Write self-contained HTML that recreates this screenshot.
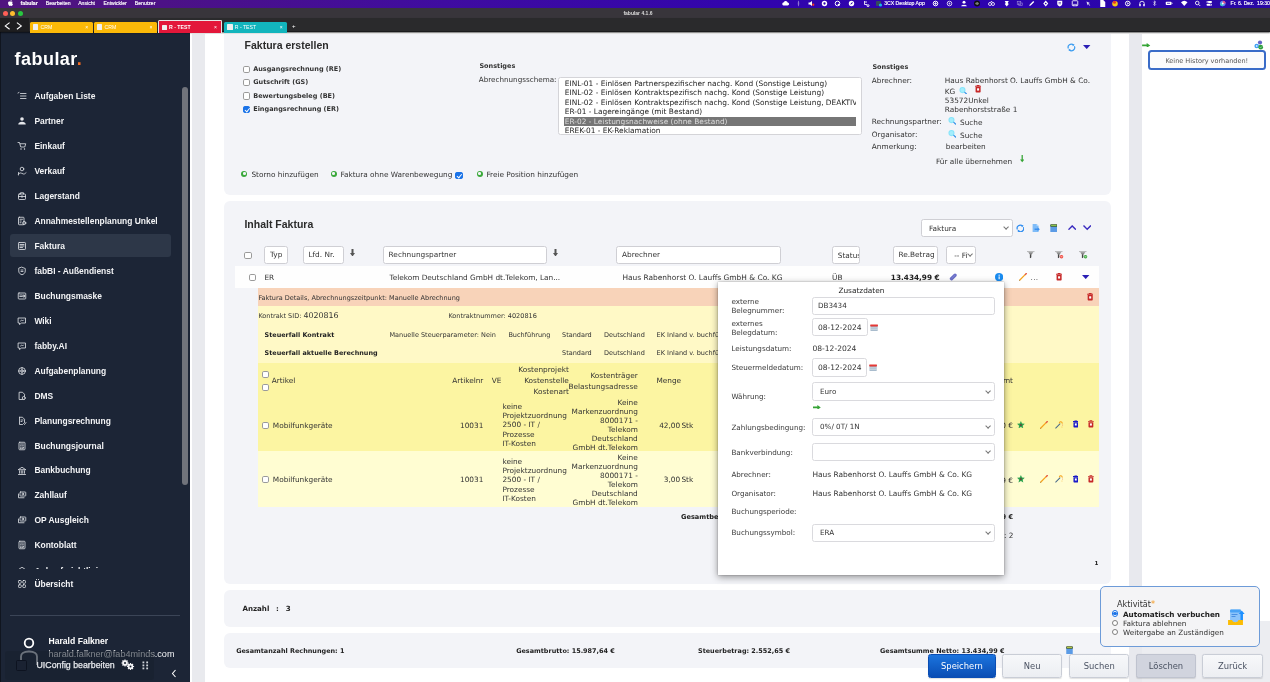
<!DOCTYPE html>
<html lang="de"><head><meta charset="utf-8"><title>fabular 4.1.6</title>
<style>
*{box-sizing:border-box;margin:0;padding:0}
html,body{width:1270px;height:682px;overflow:hidden;background:#fff}
body{will-change:transform;-webkit-font-smoothing:antialiased}
body{position:relative;font-family:"DejaVu Sans","Liberation Sans",sans-serif;font-size:7.35px;color:#333;line-height:10px}
.a{position:absolute}
.t{position:absolute;white-space:nowrap;line-height:10px}
.b{font-weight:bold;font-size:6.5px}
.s{font-size:6.53px}
.r{text-align:right}
.lib{font-family:"Liberation Sans",sans-serif}
/* chrome */
#menubar{left:0;top:0;width:1270px;height:8px;background:linear-gradient(90deg,#50147f 0%,#4c1286 13%,#3f0ca0 35%,#3104ad 60%,#2c03ae 80%,#2a08a6 100%)}
#titlebar{left:0;top:7.5px;width:1270px;height:11px;background:#38353b}
#tabbar{left:0;top:18px;width:1270px;height:13.6px;background:linear-gradient(90deg,#1e1e20 0,#1e1e20 29px,#2a2a2c 29px);border-bottom:1.2px solid #1b1b1d;box-shadow:0 .6px 1.2px rgba(0,0,0,.55)}
.mb{position:absolute;top:0;line-height:7px;font-family:"Liberation Sans",sans-serif;font-size:5.15px;color:#fff;white-space:nowrap;-webkit-text-stroke:.15px #fff}
.tab{position:absolute;top:22px;height:10.6px;border-radius:1.5px 1.5px 0 0;color:#fff;font-family:"Liberation Sans",sans-serif;font-size:5.2px;line-height:10px}
.tab i{position:absolute;left:3.1px;top:2.4px;width:5.4px;height:5.4px;background:#efefef;border-radius:.6px}
.tab span{position:absolute;left:10.5px;top:.4px}
.tab b{position:absolute;right:4.5px;top:.2px;font-weight:normal;font-size:5px}
/* sidebar */
#side{left:0;top:32.4px;width:190px;height:650px;background:#1c2536;border-left:1px solid #10151f}
.nav{position:absolute;left:33.4px;margin-top:.1px;white-space:nowrap;font-family:"Liberation Sans",sans-serif;font-weight:bold;font-size:8.45px;line-height:10px;color:#f3f4f6}
.ico{position:absolute;left:16px;width:10px;height:10px;margin-top:-.5px}
.ico svg{display:block;width:10px;height:10px}

.panel{position:absolute;background:#f3f4f8;border-radius:6px}
.cb{position:absolute;width:7.2px;height:7.2px;border:.8px solid #9a9a9a;border-radius:1.8px;background:#fff}
.cb.on{background:#1a73e8;border-color:#1a73e8}
.cb.on:after{content:"";position:absolute;left:1.9px;top:.2px;width:1.8px;height:3.6px;border:solid #fff;border-width:0 1px 1px 0;transform:rotate(40deg)}
.inp{position:absolute;background:#fff;border:.8px solid #cfcfd4;border-radius:2.5px}
.sel:after{content:"";position:absolute;right:3.6px;top:50%;margin-top:-2.6px;width:3.2px;height:3.2px;border:solid #777;border-width:0 .65px .65px 0;transform:rotate(45deg)}
.gp{position:absolute;width:6px;height:6px;border-radius:50%;background:#3aa93a}
.gp:after{content:"";position:absolute;left:1.7px;top:1.7px;width:2.6px;height:2.6px;border-radius:50%;background:#f3f4f8}

.kl{font-size:7.35px;line-height:9.05px}

.lb{position:absolute;left:731.4px;white-space:nowrap;font-size:7.2px;line-height:8.4px;color:#3a3a3a}
.pop{position:absolute;left:717.6px;top:282px;width:286.6px;height:293.4px;background:#fff;box-shadow:0 2px 7px rgba(0,0,0,.42),0 0 1.5px rgba(0,0,0,.3)}

.btn{position:absolute;top:654px;height:23.6px;width:60.4px;border-radius:2.5px;border:.8px solid #c9cdd6;background:linear-gradient(#f7f8fa,#eceef2);color:#4a5262;font-size:8.4px;line-height:23.6px;text-align:center;box-shadow:0 .5px 1px rgba(0,0,0,.12)}
.rd{position:absolute;left:1111.6px;width:6.8px;height:6.8px;margin-top:-.4px;border-radius:50%;border:.8px solid #808080;background:#fff}
</style></head><body>
<!-- backgrounds -->
<div class="a" style="left:191.8px;top:34px;width:13.7px;height:650px;background:#e9eaee"></div>
<div class="a" style="left:1129px;top:34px;width:13px;height:650px;background:#e8e9ee"></div>
<div class="a" style="left:1142px;top:621px;width:128px;height:61px;background:#ecedf1"></div>
<!-- CONTENT -->
<div class="panel" style="left:224px;top:34.2px;width:887px;height:160.6px;border-radius:0 0 6px 6px"></div>
<span class="t lib" style="left:244.6px;top:40px;font-weight:bold;font-size:10.5px;color:#2b2b2b">Faktura erstellen</span>
<i class="cb" style="left:243.3px;top:65.6px"></i><span class="t b" style="left:253.2px;top:64px">Ausgangsrechnung (RE)</span>
<i class="cb" style="left:243.3px;top:79px"></i><span class="t b" style="left:253.2px;top:77.4px">Gutschrift (GS)</span>
<i class="cb" style="left:243.3px;top:92.4px"></i><span class="t b" style="left:253.2px;top:90.8px">Bewertungsbeleg (BE)</span>
<i class="cb on" style="left:243.3px;top:105.8px"></i><span class="t b" style="left:253.2px;top:104.2px">Eingangsrechnung (ER)</span>
<i class="gp" style="left:241.4px;top:170.6px"></i><span class="t" style="left:251.4px;top:169.6px">Storno hinzufügen</span>
<i class="gp" style="left:330.6px;top:170.6px"></i><span class="t" style="left:340.4px;top:169.6px">Faktura ohne Warenbewegung</span>
<i class="cb on" style="left:455px;top:171.6px;width:7.6px;height:7.6px"></i>
<i class="gp" style="left:476.6px;top:170.6px"></i><span class="t" style="left:486.4px;top:169.6px">Freie Position hinzufügen</span>
<span class="t b" style="left:479.4px;top:61.4px">Sonstiges</span>
<span class="t" style="left:478.8px;top:75.2px;font-size:7.2px">Abrechnungsschema:</span>
<div class="inp" style="left:557.6px;top:77px;width:304px;height:57.8px;overflow:hidden;border-color:#d4d4d8">
<div class="a" style="left:5.6px;top:38.6px;width:292.2px;height:9px;background:#767676"></div>
<span class="t" style="left:6.2px;top:.8px;font-size:7.42px;line-height:9.46px;color:#222;white-space:pre">EINL-01 - Einlösen Partnerspezifischer nachg. Kond (Sonstige Leistung)
EINL-02 - Einlösen Kontraktspezifisch nachg. Kond (Sonstige Leistung)
EINL-02 - Einlösen Kontraktspezifisch nachg. Kond (Sonstige Leistung, DEAKTIV
ER-01 - Lagereingänge (mit Bestand)
<span style="color:#dcdcdc">ER-02 - Leistungsnachweise (ohne Bestand)</span>
EREK-01 - EK-Reklamation</span>
<div class="a" style="left:297.4px;top:0;width:6px;height:57px;background:#fff"></div>
</div>
<span class="t b" style="left:872.4px;top:62.4px">Sonstiges</span>
<span class="t" style="left:871.8px;top:75.6px">Abrechner:</span>
<span class="t" style="left:944.8px;top:75.6px">Haus Rabenhorst O. Lauffs GmbH &amp; Co.</span>
<span class="t" style="left:944.8px;top:86.5px">KG</span>
<span class="t" style="left:944.8px;top:96px">53572Unkel</span>
<span class="t" style="left:944.8px;top:104.7px">Rabenhorststraße 1</span>
<span class="t" style="left:871.8px;top:116.8px">Rechnungspartner:</span><span class="t" style="left:960px;top:118px">Suche</span>
<span class="t" style="left:871.8px;top:129.6px">Organisator:</span><span class="t" style="left:960px;top:130.6px">Suche</span>
<span class="t" style="left:871.8px;top:142.2px">Anmerkung:</span><span class="t" style="left:945.8px;top:142.1px">bearbeiten</span>
<span class="t" style="left:936px;top:156.5px">Für alle übernehmen</span>
<!-- P2 -->
<div class="panel" style="left:224px;top:201.4px;width:887px;height:382.6px"></div>
<span class="t lib" style="left:244.4px;top:219.4px;font-weight:bold;font-size:10.5px;color:#2b2b2b">Inhalt Faktura</span>
<i class="cb" style="left:244.4px;top:251.6px"></i>
<div class="inp" style="left:264.4px;top:245.8px;width:23.4px;height:17.8px"></div><span class="t" style="left:270.0px;top:250.2px">Typ</span>
<div class="inp" style="left:303px;top:245.8px;width:40.8px;height:17.8px"></div><span class="t" style="left:308.4px;top:250.2px">Lfd. Nr.</span>
<div class="inp" style="left:383px;top:245.8px;width:163.8px;height:17.8px"></div><span class="t" style="left:388.6px;top:250.2px">Rechnungspartner</span>
<div class="inp" style="left:616px;top:245.8px;width:165.2px;height:17.8px"></div><span class="t" style="left:622.0px;top:250.2px">Abrechner</span>
<div class="inp" style="left:832.2px;top:245.8px;width:27.8px;height:17.8px;overflow:hidden"><span class="t" style="left:4.6px;top:3.8px">Status</span></div>
<div class="inp" style="left:893.2px;top:245.8px;width:44.8px;height:17.8px"></div><span class="t" style="left:898.4px;top:250.2px">Re.Betrag</span>
<div class="inp sel" style="left:946px;top:245.8px;width:30.4px;height:17.8px;overflow:hidden"><span class="t" style="left:7.2px;top:3.8px;width:13.4px;overflow:hidden">-- Filter</span></div>
<div class="inp sel" style="left:921.4px;top:218.8px;width:91.4px;height:17.8px"></div><span class="t" style="left:929.0px;top:224.0px">Faktura</span>
<!-- white row -->
<div class="a" style="left:235.4px;top:266.4px;width:864px;height:21.6px;background:#fefefe"></div>
<i class="cb" style="left:248.6px;top:274px"></i>
<span class="t" style="left:264.4px;top:273.4px">ER</span>
<span class="t" style="left:389.4px;top:273.4px">Telekom Deutschland GmbH dt.Telekom, Lan...</span>
<span class="t" style="left:622.4px;top:273.4px;font-size:7.44px">Haus Rabenhorst O. Lauffs GmbH &amp; Co. KG</span>
<span class="t" style="left:832.0px;top:273.4px">ÜB</span>
<span class="t b" style="left:890.8px;top:273.4px;font-size:7.34px;color:#222">13.434,99 €</span>
<span class="t" style="left:1030.6px;top:273.4px;color:#666;letter-spacing:.3px">...</span>
<!-- salmon -->
<div class="a" style="left:257.8px;top:288px;width:841.4px;height:17.8px;background:#f8d3b9"></div>
<span class="t s" style="left:258.4px;top:293.4px">Faktura Details, Abrechnungszeitpunkt: Manuelle Abrechnung</span>
<!-- yellow -->
<div class="a" style="left:257.8px;top:305.8px;width:841.4px;height:57.6px;background:#fff9c6"></div>
<div class="a" style="left:257.8px;top:363.4px;width:841.4px;height:87.8px;background:#fcf5a2"></div>
<div class="a" style="left:257.8px;top:451.2px;width:841.4px;height:55.8px;background:#fffdd2"></div>
<span class="t s" style="left:258.4px;top:311.3px">Kontrakt SID: <span style="font-size:7.9px">4020816</span></span>
<span class="t s" style="left:448.4px;top:311.3px">Kontraktnummer: 4020816</span>
<span class="t b" style="left:264.6px;top:330.4px;font-size:6.43px;color:#222">Steuerfall Kontrakt</span>
<span class="t s" style="left:389.4px;top:330.4px">Manuelle Steuerparameter: Nein</span>
<span class="t s" style="left:508.4px;top:330.4px">Buchführung</span>
<span class="t s" style="left:562.0px;top:330.4px">Standard</span>
<span class="t s" style="left:604.0px;top:330.4px">Deutschland</span>
<span class="t s" style="left:656.6px;top:330.4px">EK Inland v. buchführungspfl.</span>
<span class="t b" style="left:264.6px;top:347.9px;font-size:6.43px;color:#222">Steuerfall aktuelle Berechnung</span>
<span class="t s" style="left:562.0px;top:347.9px">Standard</span>
<span class="t s" style="left:604.0px;top:347.9px">Deutschland</span>
<span class="t s" style="left:656.6px;top:347.9px">EK Inland v. buchführungspfl.</span>
<!-- item header -->
<i class="cb" style="left:262px;top:370.6px"></i><i class="cb" style="left:262px;top:383.6px"></i>
<span class="t" style="left:271.8px;top:375.8px">Artikel</span>
<span class="t r" style="left:440.0px;width:43.4px;top:375.8px">Artikelnr</span>
<span class="t" style="left:491.8px;top:375.8px">VE</span>
<span class="t r" style="left:500.0px;width:68.8px;top:365.4px;line-height:10.85px;white-space:pre">Kostenprojekt
Kostenstelle
Kostenart</span>
<span class="t r" style="left:560.0px;width:77.8px;top:370.0px;line-height:11px;white-space:pre">Kostenträger
Belastungsadresse</span>
<span class="t" style="left:656.4px;top:375.8px">Menge</span>
<span class="t r" style="left:940.0px;width:73px;top:375.8px">Betrag gesamt</span>
<i class="cb" style="left:262px;top:421.5px"></i><span class="t" style="left:272.8px;top:420.6px">Mobilfunkgeräte</span>
<span class="t r" style="left:440px;width:43.4px;top:420.6px">10031</span>
<span class="t kl" style="left:502.4px;top:402.4px;white-space:pre">keine
Projektzuordnung
2500 - IT /
Prozesse
IT-Kosten</span>
<span class="t kl r" style="left:560px;width:77.8px;top:397.6px;white-space:pre">Keine
Markenzuordnung
8000171 -
Telekom
Deutschland
GmbH dt.Telekom</span>
<span class="t r" style="left:640px;width:40.2px;top:420.6px">42,00</span><span class="t" style="left:681.4px;top:420.6px">Stk</span>
<i class="cb" style="left:262px;top:475.9px"></i><span class="t" style="left:272.8px;top:475.4px">Mobilfunkgeräte</span>
<span class="t r" style="left:440px;width:43.4px;top:475.4px">10031</span>
<span class="t kl" style="left:502.4px;top:457.4px;white-space:pre">keine
Projektzuordnung
2500 - IT /
Prozesse
IT-Kosten</span>
<span class="t kl r" style="left:560px;width:77.8px;top:452.8px;white-space:pre">Keine
Markenzuordnung
8000171 -
Telekom
Deutschland
GmbH dt.Telekom</span>
<span class="t r" style="left:640px;width:40.2px;top:475.4px">3,00</span><span class="t" style="left:681.4px;top:475.4px">Stk</span>
<span class="t r" style="left:950px;width:63px;top:420.8px">13.125,00 €</span><span class="t r" style="left:950px;width:63px;top:475.6px">309,99 €</span>
<span class="t b" style="left:681.0px;top:511.8px;font-size:6.6px;color:#222">Gesamtbetrag:</span>
<span class="t b" style="left:960.0px;top:512.0px;font-size:6.6px;color:#222;width:53px;text-align:right">13.434,99 €</span>
<span class="t" style="left:990px;top:530.6px;width:23.4px;text-align:right">: 2</span>
<span class="t b" style="left:1094.4px;top:558.4px;font-size:5.6px;color:#222">1</span>
<!-- P3 -->
<div class="panel" style="left:224px;top:589.8px;width:887px;height:37px"></div>
<span class="t b" style="left:242.4px;top:603.6px;font-size:7.1px;word-spacing:.9px;color:#222;white-space:pre">Anzahl  :  3</span>
<div class="panel" style="left:224px;top:633px;width:887px;height:35.4px"></div>
<span class="t b" style="left:236.2px;top:645.6px;font-size:6.46px;color:#222">Gesamtanzahl Rechnungen: 1</span>
<span class="t b" style="left:516.2px;top:645.6px;font-size:6.46px;color:#222">Gesamtbrutto: 15.987,64 €</span>
<span class="t b" style="left:698px;top:645.6px;font-size:6.46px;color:#222">Steuerbetrag: 2.552,65 €</span>
<span class="t b" style="left:880px;top:645.6px;font-size:6.46px;color:#222">Gesamtsumme Netto: 13.434,99 €</span>
<svg class="a" style="left:1015.6px;top:223.6px;width:8.8px;height:8.8px" viewBox="0 0 20 20"><path d="M3.200 12.500A7 7 0 0 1 14.500 4.600M16.800 7.500A7 7 0 0 1 5.500 15.400" fill="none" stroke="#2f8df0" stroke-width="2.800"/><path fill="#2f8df0" d="M12.500 1.500l5 2.500-4.200 3.200zM7.500 18.500l-5-2.500 4.200-3.200z"/></svg>
<svg class="a" style="left:1031.8px;top:224px;width:8.2px;height:8px" viewBox="0 0 16 16"><path d="M1 0h8l4 4v12H1z" fill="#7fbcf8"/><path d="M9 0l4 4H9z" fill="#b9dbfb"/><path d="M5 9h6V6.500l4.500 4-4.500 4V12H5z" fill="#3a8fee"/></svg>
<svg class="a" style="left:1049.5px;top:223.8px;width:7.6px;height:8.4px" viewBox="0 0 15 17"><rect x=".5" y="2" width="14" height="15" rx="1" fill="#5b9be6"/><rect x=".5" y=".5" width="14" height="5" rx="1" fill="#3c5a2a"/><rect x="2" y="1.800" width="11" height="2.400" fill="#8bc34a"/></svg>
<svg class="a" style="left:1067.6px;top:225.2px;width:8.4px;height:5.2px" viewBox="0 0 17 10"><path d="M1 9.200L8.500 1.600 16 9.200" fill="none" stroke="#3a2bc0" stroke-width="2.800"/></svg>
<svg class="a" style="left:1082.8px;top:225.4px;width:8.4px;height:5.2px" viewBox="0 0 17 10"><path d="M1 .8L8.500 8.400 16 .8" fill="none" stroke="#3a2bc0" stroke-width="2.800"/></svg>
<svg class="a" style="left:1027.4px;top:250.6px;width:9px;height:8.6px" viewBox="0 0 18 17"><path d="M0 1h15" stroke="#a8a8a8" stroke-width="1.600"/><path d="M2.500 2.500h10L9 7.500V13H6V7.500z" fill="#8a8a8a"/><path d="M6.800 7v7" stroke="#333" stroke-width="1.800"/></svg>
<svg class="a" style="left:1055px;top:250.6px;width:9px;height:8.6px" viewBox="0 0 18 17"><path d="M0 1h15" stroke="#a8a8a8" stroke-width="1.600"/><path d="M2.500 2.500h10L9 7.500V13H6V7.500z" fill="#8a8a8a"/><path d="M6.800 7v7" stroke="#333" stroke-width="1.800"/><circle cx="13" cy="11.500" r="3.600" fill="#f0443a"/><path d="M11 11.500h4" stroke="#fff" stroke-width="1.300"/></svg>
<svg class="a" style="left:1079.4px;top:250.6px;width:9px;height:8.6px" viewBox="0 0 18 17"><path d="M0 1h15" stroke="#a8a8a8" stroke-width="1.600"/><path d="M2.500 2.500h10L9 7.500V13H6V7.500z" fill="#8a8a8a"/><path d="M6.800 7v7" stroke="#333" stroke-width="1.800"/><circle cx="13" cy="11.500" r="3.600" fill="#3aa93a"/><path d="M11 11.500h4" stroke="#fff" stroke-width="1.300"/></svg>
<svg class="a" style="left:949.2px;top:272.8px;width:8.6px;height:8px" viewBox="0 0 17 16"><path d="M4.800 11.400L12 4.400" stroke="#6a6fc8" stroke-width="6.600" stroke-linecap="round"/><path d="M5.500 10.700L11.300 5" stroke="#8f94dc" stroke-width="1.200" stroke-linecap="round"/></svg>
<svg class="a" style="left:995px;top:272.8px;width:8.2px;height:8.2px" viewBox="0 0 16 16"><circle cx="8" cy="8" r="8" fill="#1a8cf0"/><rect x="7" y="6.600" width="2.200" height="5.600" fill="#fff"/><circle cx="8.100" cy="4.300" r="1.300" fill="#fff"/></svg>
<svg class="a" style="left:1018.8px;top:273.2px;width:8.2px;height:7.8px" viewBox="0 0 16 15"><path d="M1.200 14L13 2.200" stroke="#f5a21b" stroke-width="2.300" stroke-linecap="round"/><path d="M12.300 2.900L14.500 .9" stroke="#e2574c" stroke-width="2.300" stroke-linecap="round"/><path d="M.5 14.800l1.800-.6-1.200-1.200z" fill="#555"/></svg>
<svg class="a" style="left:1056px;top:273.2px;width:6.2px;height:7.6px" viewBox="0 0 12 15"><path fill="#c62828" d="M3.500 0h5l.7 1.300H12v2H0v-2h2.800zM1 4h10v9.500A1.500 1.500 0 0 1 9.500 15h-7A1.500 1.500 0 0 1 1 13.500z"/><rect x="4" y="6.500" width="4" height="4.500" fill="#fff"/></svg>
<svg class="a" style="left:1082.2px;top:275px;width:7.4px;height:4.2px" viewBox="0 0 15 8"><path d="M0 0h15L7.500 8z" fill="#2a1fb5"/></svg>
<svg class="a" style="left:1087px;top:293.2px;width:6.4px;height:7.6px" viewBox="0 0 12 15"><path fill="#c62828" d="M3.500 0h5l.7 1.300H12v2H0v-2h2.800zM1 4h10v9.500A1.500 1.500 0 0 1 9.500 15h-7A1.500 1.500 0 0 1 1 13.500z"/><rect x="4" y="6.500" width="4" height="4.500" fill="#fff"/></svg>
<svg class="a" style="left:1016.8px;top:421px;width:7.8px;height:7.4px" viewBox="0 0 20 19"><path fill="#2ea44f" d="M10 0l2.900 6.600 7.100.7-5.400 4.700 1.600 7-6.200-3.700L3.800 19l1.600-7L0 7.300l7.100-.7z"/><circle cx="10" cy="10.500" r="2.800" fill="#5a4a3a"/></svg>
<svg class="a" style="left:1039.8px;top:421px;width:8.2px;height:7.8px" viewBox="0 0 16 15"><path d="M1.200 14L13 2.200" stroke="#f5a21b" stroke-width="2.300" stroke-linecap="round"/><path d="M12.300 2.900L14.500 .9" stroke="#e2574c" stroke-width="2.300" stroke-linecap="round"/><path d="M.5 14.800l1.800-.6-1.200-1.200z" fill="#555"/></svg>
<svg class="a" style="left:1055px;top:421px;width:8.8px;height:7.6px" viewBox="0 0 17 15"><path d="M1.200 14L9.500 5.600" stroke="#4a6b8a" stroke-width="2" stroke-linecap="round"/><path d="M8.500 3.800c1-3 5-3 5.500 .4" fill="none" stroke="#f5a21b" stroke-width="2.200" stroke-linecap="round"/><circle cx="14.800" cy="8" r=".9" fill="#e2574c"/><circle cx="13.600" cy="11.800" r=".9" fill="#f5a21b"/></svg>
<svg class="a" style="left:1072.8px;top:420.4px;width:5.6px;height:7.8px" viewBox="0 0 12 15"><path fill="#1a1ac8" d="M3.500 0h5l.7 1.300H12v2H0v-2h2.800zM1 4h10v9.500A1.500 1.500 0 0 1 9.500 15h-7A1.500 1.500 0 0 1 1 13.500z"/><rect x="4" y="6.500" width="4" height="4.500" fill="#fff"/></svg>
<svg class="a" style="left:1088.4px;top:420.4px;width:5.8px;height:7.8px" viewBox="0 0 12 15"><path fill="#c62828" d="M3.500 0h5l.7 1.300H12v2H0v-2h2.800zM1 4h10v9.500A1.500 1.500 0 0 1 9.500 15h-7A1.500 1.500 0 0 1 1 13.500z"/><rect x="4" y="6.500" width="4" height="4.500" fill="#fff"/></svg>
<svg class="a" style="left:1016.8px;top:475.4px;width:7.8px;height:7.4px" viewBox="0 0 20 19"><path fill="#2ea44f" d="M10 0l2.900 6.600 7.100.7-5.400 4.700 1.600 7-6.200-3.700L3.800 19l1.600-7L0 7.300l7.100-.7z"/><circle cx="10" cy="10.500" r="2.800" fill="#5a4a3a"/></svg>
<svg class="a" style="left:1039.8px;top:475.4px;width:8.2px;height:7.8px" viewBox="0 0 16 15"><path d="M1.200 14L13 2.200" stroke="#f5a21b" stroke-width="2.300" stroke-linecap="round"/><path d="M12.300 2.900L14.500 .9" stroke="#e2574c" stroke-width="2.300" stroke-linecap="round"/><path d="M.5 14.800l1.800-.6-1.200-1.200z" fill="#555"/></svg>
<svg class="a" style="left:1055px;top:475.4px;width:8.8px;height:7.6px" viewBox="0 0 17 15"><path d="M1.200 14L9.500 5.600" stroke="#4a6b8a" stroke-width="2" stroke-linecap="round"/><path d="M8.500 3.800c1-3 5-3 5.500 .4" fill="none" stroke="#f5a21b" stroke-width="2.200" stroke-linecap="round"/><circle cx="14.800" cy="8" r=".9" fill="#e2574c"/><circle cx="13.600" cy="11.800" r=".9" fill="#f5a21b"/></svg>
<svg class="a" style="left:1072.8px;top:474.79999999999995px;width:5.6px;height:7.8px" viewBox="0 0 12 15"><path fill="#1a1ac8" d="M3.500 0h5l.7 1.300H12v2H0v-2h2.800zM1 4h10v9.500A1.500 1.500 0 0 1 9.500 15h-7A1.500 1.500 0 0 1 1 13.500z"/><rect x="4" y="6.500" width="4" height="4.500" fill="#fff"/></svg>
<svg class="a" style="left:1088.4px;top:474.79999999999995px;width:5.8px;height:7.8px" viewBox="0 0 12 15"><path fill="#c62828" d="M3.500 0h5l.7 1.300H12v2H0v-2h2.800zM1 4h10v9.500A1.500 1.500 0 0 1 9.500 15h-7A1.500 1.500 0 0 1 1 13.500z"/><rect x="4" y="6.500" width="4" height="4.500" fill="#fff"/></svg>
<svg class="a" style="left:1142.3px;top:42.6px;width:8.4px;height:4.8px" viewBox="0 0 17 10"><path d="M0 3h9.500V0L17 5l-7.500 5V7H0z" fill="#35a435"/></svg>
<svg class="a" style="left:1254.4px;top:40.4px;width:10px;height:10px" viewBox="0 0 20 20"><circle cx="12" cy="5" r="4.200" fill="#6464c8"/><circle cx="5.400" cy="12" r="4.600" fill="#3fa0f5"/><circle cx="5.400" cy="12" r="1.800" fill="#d6ebfd"/><circle cx="13.400" cy="14.400" r="4.700" fill="#2e9e3e"/><path d="M11.500 14.500l1.500 1.500 2.500-3" stroke="#bfe6c4" stroke-width="1.200" fill="none"/></svg>
<!-- POPUP -->
<div class="pop"></div>
<span class="t" style="left:838.4px;top:286.1px;color:#222">Zusatzdaten</span>
<span class="lb" style="top:298.4px;white-space:pre">externe
Belegnummer:</span>
<div class="inp" style="left:812.4px;top:296.5px;width:182.8px;height:18px;border-color:#dadade"></div><span class="t" style="left:818px;top:301.3px;font-size:7.2px">DB3434</span>
<span class="lb" style="top:320.2px;white-space:pre">externes
Belegdatum:</span>
<div class="inp" style="left:812.4px;top:318.2px;width:55.4px;height:18.3px;border-color:#dadade"></div><span class="t" style="left:818px;top:322.9px;font-size:7.5px">08-12-2024</span>
<span class="lb" style="top:345.0px">Leistungsdatum:</span><span class="t" style="left:812.4px;top:343.5px;font-size:7.58px">08-12-2024</span>
<span class="lb" style="top:364.4px">Steuermeldedatum:</span>
<div class="inp" style="left:812.4px;top:358.4px;width:54.4px;height:18.2px;border-color:#dadade"></div><span class="t" style="left:818px;top:362.9px;font-size:7.5px">08-12-2024</span>
<span class="lb" style="top:393.4px">Währung:</span>
<div class="inp sel" style="left:812.2px;top:382.4px;width:183px;height:18.4px;border-color:#dadade"></div><span class="t" style="left:820px;top:387.1px;font-size:7.2px">Euro</span>
<span class="lb" style="top:423.9px">Zahlungsbedingung:</span>
<div class="inp sel" style="left:812.2px;top:417.6px;width:183px;height:18.2px;border-color:#dadade"></div><span class="t" style="left:820px;top:422.3px;font-size:7.2px">0%/ 0T/ 1N</span>
<span class="lb" style="top:449.0px">Bankverbindung:</span>
<div class="inp sel" style="left:812.2px;top:442.8px;width:183px;height:18.2px;border-color:#dadade"></div>
<span class="lb" style="top:470.8px">Abrechner:</span><span class="t" style="left:812.4px;top:470.1px;font-size:7.43px">Haus Rabenhorst O. Lauffs GmbH &amp; Co. KG</span>
<span class="lb" style="top:489.7px">Organisator:</span><span class="t" style="left:812.4px;top:489px;font-size:7.43px">Haus Rabenhorst O. Lauffs GmbH &amp; Co. KG</span>
<span class="lb" style="top:508.0px">Buchungsperiode:</span>
<span class="lb" style="top:529.4px">Buchungssymbol:</span>
<div class="inp sel" style="left:812.2px;top:523.6px;width:183px;height:18.2px;border-color:#dadade"></div><span class="t" style="left:820px;top:528.1px;font-size:7.2px">ERA</span>
<svg class="a" style="left:869.8px;top:323.7px;width:8.2px;height:7.2px" viewBox="0 0 16 14"><rect x="1" y="2" width="14" height="12" rx="1" fill="#a9bccd"/><rect x=".5" y=".8" width="15" height="4" rx=".8" fill="#e53935"/><path d="M1.500 7.500h13M1.500 10.500h13" stroke="#e8eef4" stroke-width="1"/></svg>
<svg class="a" style="left:869px;top:364.3px;width:8.2px;height:7.2px" viewBox="0 0 16 14"><rect x="1" y="2" width="14" height="12" rx="1" fill="#a9bccd"/><rect x=".5" y=".8" width="15" height="4" rx=".8" fill="#e53935"/><path d="M1.500 7.500h13M1.500 10.500h13" stroke="#e8eef4" stroke-width="1"/></svg>
<svg class="a" style="left:813px;top:404.6px;width:7.8px;height:4.8px" viewBox="0 0 17 10"><path d="M0 3h9.500V0L17 5l-7.500 5V7H0z" fill="#35a435"/></svg>
<!-- /POPUP -->
<!-- BTN -->
<div class="btn" style="left:927.6px;width:68.6px;background:linear-gradient(#1b74de,#0a4db4);border-color:#0a4db4;color:#fff">Speichern</div>
<div class="btn" style="left:1002px">Neu</div>
<div class="btn" style="left:1069px">Suchen</div>
<div class="btn" style="left:1135.8px;background:#d1d4de;border-color:#bfc3cf">Löschen</div>
<div class="btn" style="left:1202.4px">Zurück</div>
<!-- ACT -->
<div class="a" style="left:1100.2px;top:586.2px;width:159.6px;height:60.8px;border:.9px solid #6d9bd8;border-radius:5px;background:#f4f4f6"></div>
<span class="t" style="left:1117.0px;top:599.4px;font-size:8.1px;color:#333">Aktivität<span style="color:#f59a23">*</span></span>
<i class="rd" style="top:610.8px;border-color:#1a73e8"></i><i class="a" style="left:1113.3px;top:612.1px;width:3.4px;height:3.4px;border-radius:50%;background:#1a73e8"></i>
<i class="rd" style="top:619.9px"></i>
<i class="rd" style="top:628.9px"></i>
<span class="t b" style="left:1123.0px;top:610.2px;font-size:7.25px;color:#222">Automatisch verbuchen</span>
<span class="t" style="left:1123.0px;top:619.2px;font-size:7.3px">Faktura ablehnen</span>
<span class="t" style="left:1123.0px;top:628.2px;font-size:7.28px">Weitergabe an Zuständigen</span>
<!-- RP -->
<div class="a" style="left:1148px;top:50.2px;width:118.4px;height:19.4px;border:2.1px solid #3a6cc8;border-radius:3.5px;background:#fbfbfc"></div>
<span class="t" style="left:1165.4px;top:55.8px;font-size:6.53px;color:#555">Keine History vorhanden!</span>
<!-- ICONS -->
<svg class="a" style="left:1067.2px;top:43.2px;width:8.8px;height:8.8px" viewBox="0 0 20 20"><path d="M3.200 12.500A7 7 0 0 1 14.500 4.600M16.800 7.500A7 7 0 0 1 5.500 15.400" fill="none" stroke="#3b9cf0" stroke-width="2.800"/><path fill="#3b9cf0" d="M12.500 1.500l5 2.500-4.200 3.200zM7.500 18.500l-5-2.500 4.200-3.200z"/></svg>
<svg class="a" style="left:1083.4px;top:45.2px;width:7.4px;height:4.2px" viewBox="0 0 15 8"><path d="M0 0h15L7.500 8z" fill="#2a1fb5"/></svg>
<svg class="a" style="left:958.8px;top:86.6px;width:8.6px;height:7.8px" viewBox="0 0 17 16"><circle cx="6.800" cy="6.400" r="6.200" fill="#86e4fa"/><circle cx="6.800" cy="6.400" r="4.200" fill="#a5edfc"/><path d="M11.600 11l3.600 3.400" stroke="#2f8fe8" stroke-width="2.400" stroke-linecap="round"/></svg>
<svg class="a" style="left:975.2px;top:85.4px;width:6.2px;height:7.6px" viewBox="0 0 12 15"><path fill="#c62828" d="M3.500 0h5l.7 1.300H12v2H0v-2h2.800zM1 4h10v9.500A1.500 1.500 0 0 1 9.500 15h-7A1.500 1.500 0 0 1 1 13.500z"/><rect x="4" y="6.500" width="4" height="4.500" fill="#fff"/></svg>
<svg class="a" style="left:947.8px;top:117.2px;width:8.6px;height:7.8px" viewBox="0 0 17 16"><circle cx="6.800" cy="6.400" r="6.200" fill="#86e4fa"/><circle cx="6.800" cy="6.400" r="4.200" fill="#a5edfc"/><path d="M11.600 11l3.600 3.400" stroke="#2f8fe8" stroke-width="2.400" stroke-linecap="round"/></svg>
<svg class="a" style="left:947.8px;top:130.1px;width:8.6px;height:7.8px" viewBox="0 0 17 16"><circle cx="6.800" cy="6.400" r="6.200" fill="#86e4fa"/><circle cx="6.800" cy="6.400" r="4.200" fill="#a5edfc"/><path d="M11.600 11l3.600 3.400" stroke="#2f8fe8" stroke-width="2.400" stroke-linecap="round"/></svg>
<svg class="a" style="left:1020px;top:155.2px;width:4.4px;height:7.4px" viewBox="0 0 9 15"><path d="M3.200 0h2.600v9H9l-4.500 6L0 9h3.200z" fill="#35a435"/></svg>
<svg class="a" style="left:350.4px;top:248.8px;width:5px;height:7.6px" viewBox="0 0 10 15"><path d="M3 0h4v8h3l-5 7-5-7h3z" fill="#555"/></svg>
<svg class="a" style="left:553px;top:248.8px;width:5px;height:7.6px" viewBox="0 0 10 15"><path d="M3 0h4v8h3l-5 7-5-7h3z" fill="#555"/></svg>
<svg class="a" style="left:1228.4px;top:608.6px;width:17px;height:16.4px" viewBox="0 0 34 33"><rect x="4" y="1" width="22" height="26" rx="2" fill="#8cc4fa"/><rect x="4" y="1" width="22" height="6" rx="2" fill="#4aa3f5"/><path d="M7 11h12M7 15h8" stroke="#4a90e2" stroke-width="2.200"/><path d="M25 24V10h-3.500L27.500 3l6 7H30v14z" fill="#1e90ff"/><path d="M0 22h8c1 3 3 4.500 6.500 4.500S20 25 21 22h9v9.500a1.500 1.500 0 0 1-1.500 1.500h-27A1.500 1.500 0 0 1 0 31.500z" fill="#fbbc05"/></svg>
<svg class="a" style="left:1065.8px;top:646px;width:7px;height:8px" viewBox="0 0 14 16"><rect x=".5" y="2" width="13" height="14" rx="1" fill="#5b9be6"/><rect x=".5" y=".5" width="13" height="5" rx="1" fill="#4a5a2a"/><rect x="2" y="1.800" width="10" height="2.400" fill="#b5c94a"/></svg>
<!-- ICONS3 -->



<!-- SIDEBAR -->
<div id="side" class="a">
<span class="a lib" style="left:13.6px;top:14.4px;font-weight:bold;font-size:18px;line-height:24px;color:#fff;letter-spacing:.45px;white-space:nowrap">fabular<span style="color:#f26b21">.</span></span>
<div class="a" style="left:9px;top:202px;width:161px;height:22.6px;border-radius:3px;background:#2d3748"></div>
<div class="a" style="left:0;top:0;width:189px;height:536.8px;overflow:hidden">
<span class="ico" style="top:59.6px"><svg viewBox="0 0 20 20"><path fill="none" stroke="#e5e7eb" stroke-width="1.6" stroke-linecap="round" stroke-linejoin="round" d="M7 5h11M7 10h11M7 15h11M2 4l2-1"/></svg></span><span class="nav" style="top:58.9px">Aufgaben Liste</span>
<span class="ico" style="top:84.5px"><svg viewBox="0 0 20 20"><circle cx="10" cy="6" r="3.6" fill="#e5e7eb"/><path fill="#e5e7eb" d="M2.500 17c0-4 3.500-5.500 7.500-5.500s7.500 1.500 7.500 5.500z"/></svg></span><span class="nav" style="top:83.8px">Partner</span>
<span class="ico" style="top:109.5px"><svg viewBox="0 0 20 20"><path fill="none" stroke="#e5e7eb" stroke-width="1.6" stroke-linecap="round" stroke-linejoin="round" d="M2 3h3l2.500 9h8l2-6.500H6.500"/><circle cx="8" cy="16" r="1.400" fill="#e5e7eb"/><circle cx="15" cy="16" r="1.400" fill="#e5e7eb"/></svg></span><span class="nav" style="top:108.8px">Einkauf</span>
<span class="ico" style="top:134.4px"><svg viewBox="0 0 20 20"><circle cx="10" cy="6" r="3.600" fill="none" stroke="#e5e7eb" stroke-width="1.6" stroke-linecap="round" stroke-linejoin="round"/><path fill="none" stroke="#e5e7eb" stroke-width="1.6" stroke-linecap="round" stroke-linejoin="round" d="M3 16c2-2.500 4-2.500 6-1.500l4 1.500c2 .5 3-1 5-2.500M3 13v5"/></svg></span><span class="nav" style="top:133.7px">Verkauf</span>
<span class="ico" style="top:159.4px"><svg viewBox="0 0 20 20"><rect x="3" y="6" width="14" height="11" rx="1.500" fill="none" stroke="#e5e7eb" stroke-width="1.6" stroke-linecap="round" stroke-linejoin="round"/><path fill="none" stroke="#e5e7eb" stroke-width="1.6" stroke-linecap="round" stroke-linejoin="round" d="M7 6V3.500h6V6M3 11h14M10 9v4"/></svg></span><span class="nav" style="top:158.7px">Lagerstand</span>
<span class="ico" style="top:184.3px"><svg viewBox="0 0 20 20"><rect x="3" y="2.500" width="11" height="15" rx="1.500" fill="none" stroke="#e5e7eb" stroke-width="1.6" stroke-linecap="round" stroke-linejoin="round"/><path fill="none" stroke="#e5e7eb" stroke-width="1.6" stroke-linecap="round" stroke-linejoin="round" d="M6 6.500h5M6 10h2.500M6 13.500h2"/><circle cx="14.500" cy="14" r="3.200" fill="none" stroke="#e5e7eb" stroke-width="1.6" stroke-linecap="round" stroke-linejoin="round"/></svg></span><span class="nav" style="top:183.6px">Annahmestellenplanung Unkel</span>
<span class="ico" style="top:209.2px"><svg viewBox="0 0 20 20"><rect x="3" y="3" width="14" height="14" rx="1.500" fill="none" stroke="#e5e7eb" stroke-width="1.6" stroke-linecap="round" stroke-linejoin="round"/><path fill="none" stroke="#e5e7eb" stroke-width="1.6" stroke-linecap="round" stroke-linejoin="round" d="M6 7h8M6 10h8M6 13h5"/></svg></span><span class="nav" style="top:208.5px">Faktura</span>
<span class="ico" style="top:234.2px"><svg viewBox="0 0 20 20"><path fill="none" stroke="#e5e7eb" stroke-width="1.6" stroke-linecap="round" stroke-linejoin="round" d="M10 2.500l6.500 2.500v5c0 4-3 6.500-6.500 7.500-3.500-1-6.500-3.500-6.500-7.500V5z"/><path fill="none" stroke="#e5e7eb" stroke-width="1.6" stroke-linecap="round" stroke-linejoin="round" d="M8 8h4M8 11h4"/></svg></span><span class="nav" style="top:233.5px">fabBI - Außendienst</span>
<span class="ico" style="top:259.1px"><svg viewBox="0 0 20 20"><rect x="2.500" y="4" width="15" height="12" rx="1.500" fill="none" stroke="#e5e7eb" stroke-width="1.6" stroke-linecap="round" stroke-linejoin="round"/><path fill="none" stroke="#e5e7eb" stroke-width="1.6" stroke-linecap="round" stroke-linejoin="round" d="M5.500 8h5M5.500 11h5M13 8h2v4h-2z"/></svg></span><span class="nav" style="top:258.4px">Buchungsmaske</span>
<span class="ico" style="top:284.1px"><svg viewBox="0 0 20 20"><path fill="none" stroke="#e5e7eb" stroke-width="1.6" stroke-linecap="round" stroke-linejoin="round" d="M3 4h14v10H9l-4 3v-3H3z"/><path fill="none" stroke="#e5e7eb" stroke-width="1.6" stroke-linecap="round" stroke-linejoin="round" d="M7 10l2-2 2 2 2-2"/></svg></span><span class="nav" style="top:283.4px">Wiki</span>
<span class="ico" style="top:309.0px"><svg viewBox="0 0 20 20"><path fill="none" stroke="#e5e7eb" stroke-width="1.6" stroke-linecap="round" stroke-linejoin="round" d="M3 4h14v10H9l-4 3v-3H3z"/><path fill="none" stroke="#e5e7eb" stroke-width="1.6" stroke-linecap="round" stroke-linejoin="round" d="M7 10l2-2 2 2 2-2"/></svg></span><span class="nav" style="top:308.3px">fabby.AI</span>
<span class="ico" style="top:333.9px"><svg viewBox="0 0 20 20"><circle cx="10" cy="10" r="6.800" fill="none" stroke="#e5e7eb" stroke-width="1.6" stroke-linecap="round" stroke-linejoin="round"/><circle cx="10" cy="10" r="2.300" fill="none" stroke="#e5e7eb" stroke-width="1.6" stroke-linecap="round" stroke-linejoin="round"/><path fill="none" stroke="#e5e7eb" stroke-width="1.6" stroke-linecap="round" stroke-linejoin="round" d="M10 3v4.500M10 12.500V17M3 10h4.500M12.500 10H17"/></svg></span><span class="nav" style="top:333.2px">Aufgabenplanung</span>
<span class="ico" style="top:358.9px"><svg viewBox="0 0 20 20"><path fill="none" stroke="#e5e7eb" stroke-width="1.6" stroke-linecap="round" stroke-linejoin="round" d="M5 2.500h6l4 4V17H5z"/><circle cx="13.500" cy="14" r="3" fill="#1c2536" fill="none" stroke="#e5e7eb" stroke-width="1.6" stroke-linecap="round" stroke-linejoin="round"/></svg></span><span class="nav" style="top:358.2px">DMS</span>
<span class="ico" style="top:383.8px"><svg viewBox="0 0 20 20"><path fill="none" stroke="#e5e7eb" stroke-width="1.6" stroke-linecap="round" stroke-linejoin="round" d="M5 2.500h6l4 4V13M5 2.500V17h6"/><path fill="none" stroke="#e5e7eb" stroke-width="1.6" stroke-linecap="round" stroke-linejoin="round" d="M8 8h4M8 11h2M13 15l2 2 3-4"/></svg></span><span class="nav" style="top:383.1px">Planungsrechnung</span>
<span class="ico" style="top:408.8px"><svg viewBox="0 0 20 20"><rect x="4" y="2.500" width="12" height="15" rx="1.500" fill="none" stroke="#e5e7eb" stroke-width="1.6" stroke-linecap="round" stroke-linejoin="round"/><path fill="none" stroke="#e5e7eb" stroke-width="1.6" stroke-linecap="round" stroke-linejoin="round" d="M7 6h6M7 9.500h1M10 9.500h1M13 9.500h0M7 12.500h1M10 12.500h1M13 12.500v2M7 15h1M10 15h1"/></svg></span><span class="nav" style="top:408.1px">Buchungsjournal</span>
<span class="ico" style="top:433.7px"><svg viewBox="0 0 20 20"><path fill="none" stroke="#e5e7eb" stroke-width="1.6" stroke-linecap="round" stroke-linejoin="round" d="M3 7l7-4.500L17 7zM5 9.500v5M8.500 9.500v5M11.500 9.500v5M15 9.500v5M3 17h14"/></svg></span><span class="nav" style="top:433.0px">Bankbuchung</span>
<span class="ico" style="top:458.6px"><svg viewBox="0 0 20 20"><rect x="6" y="4" width="11.500" height="8" rx="1.200" fill="none" stroke="#e5e7eb" stroke-width="1.6" stroke-linecap="round" stroke-linejoin="round"/><path fill="none" stroke="#e5e7eb" stroke-width="1.6" stroke-linecap="round" stroke-linejoin="round" d="M3 8v7.500h11"/><circle cx="11.700" cy="8" r="1.700" fill="none" stroke="#e5e7eb" stroke-width="1.6" stroke-linecap="round" stroke-linejoin="round"/></svg></span><span class="nav" style="top:457.9px">Zahllauf</span>
<span class="ico" style="top:483.6px"><svg viewBox="0 0 20 20"><rect x="6" y="4" width="11.500" height="8" rx="1.200" fill="none" stroke="#e5e7eb" stroke-width="1.6" stroke-linecap="round" stroke-linejoin="round"/><path fill="none" stroke="#e5e7eb" stroke-width="1.6" stroke-linecap="round" stroke-linejoin="round" d="M3 8v7.500h11"/><circle cx="11.700" cy="8" r="1.700" fill="none" stroke="#e5e7eb" stroke-width="1.6" stroke-linecap="round" stroke-linejoin="round"/></svg></span><span class="nav" style="top:482.9px">OP Ausgleich</span>
<span class="ico" style="top:508.5px"><svg viewBox="0 0 20 20"><rect x="4" y="2.500" width="12" height="15" rx="1.500" fill="none" stroke="#e5e7eb" stroke-width="1.6" stroke-linecap="round" stroke-linejoin="round"/><path fill="none" stroke="#e5e7eb" stroke-width="1.6" stroke-linecap="round" stroke-linejoin="round" d="M7 6h6M7 9.500h1M10 9.500h1M13 9.500h0M7 12.500h1M10 12.500h1M13 12.500v2M7 15h1M10 15h1"/></svg></span><span class="nav" style="top:507.8px">Kontoblatt</span>
<span class="ico" style="top:534.4px"><svg viewBox="0 0 20 20"><path fill="none" stroke="#e5e7eb" stroke-width="1.6" stroke-linecap="round" stroke-linejoin="round" d="M3 7l7-4.500L17 7zM5 9.500v5M8.500 9.500v5M11.500 9.500v5M15 9.500v5M3 17h14"/></svg></span><span class="nav" style="top:533.7px">Ankaufsrichtlinie</span>
</div>
<span class="ico" style="top:547.1px"><svg viewBox="0 0 20 20"><rect x="3" y="3" width="5.500" height="5.500" rx="1.500" fill="none" stroke="#e5e7eb" stroke-width="1.6" stroke-linecap="round" stroke-linejoin="round"/><rect x="11.500" y="3" width="5.500" height="5.500" rx="1.500" fill="none" stroke="#e5e7eb" stroke-width="1.6" stroke-linecap="round" stroke-linejoin="round"/><rect x="3" y="11.500" width="5.500" height="5.500" rx="1.500" fill="none" stroke="#e5e7eb" stroke-width="1.6" stroke-linecap="round" stroke-linejoin="round"/><rect x="11.500" y="11.500" width="5.500" height="5.500" rx="1.500" fill="none" stroke="#e5e7eb" stroke-width="1.6" stroke-linecap="round" stroke-linejoin="round"/></svg></span><span class="nav" style="top:546.4px">Übersicht</span>
<div class="a" style="left:181.1px;top:54.4px;width:6px;height:398px;border-radius:3px;background:#70737b"></div>
<div class="a" style="left:9px;top:582.6px;width:170px;height:.8px;background:#3b4557"></div>
<svg class="a" style="left:17px;top:603px;width:22px;height:30px" viewBox="0 0 22 30"><circle cx="11" cy="8" r="4.300" fill="none" stroke="#fff" stroke-width="1.800"/><path d="M3 30v-8.500c0-3 2.500-4.800 8-4.800s8 1.800 8 4.800V30" fill="none" stroke="#d1d5db" stroke-width="1.800"/></svg>
<span class="nav" style="left:47.5px;top:604px;font-size:8.6px;color:#fff">Harald Falkner</span>
<span class="nav" style="left:47.5px;top:616.6px;font-weight:normal;font-size:9.1px;color:#f3f4f6">harald.falkner@fab4minds.com</span>
<div class="a" style="left:4px;top:619px;width:149.4px;height:28.4px;border-radius:3px;background:rgba(24,32,46,.55)"></div>
<div class="a" style="left:15.4px;top:628px;width:10.6px;height:10.6px;border:1px solid #0d1320;border-radius:1.500px;background:#1a2232"></div>
<span class="nav" style="left:35.5px;top:628px;font-weight:normal;font-size:8.8px;color:#e5e7eb;-webkit-text-stroke:.25px #e5e7eb">UIConfig bearbeiten</span>
<svg class="a" style="left:120px;top:627px;width:14px;height:12px" viewBox="0 0 28 24"><g fill="#f3f4f6"><circle cx="8" cy="8" r="5.500"/><circle cx="19" cy="15" r="5.500"/></g><g fill="#18202e"><circle cx="8" cy="8" r="2.200"/><circle cx="19" cy="15" r="2.200"/></g><g stroke="#f3f4f6" stroke-width="2.400"><path d="M8 .8v14.400M.8 8h14.400M3 3l10 10M13 3L3 13M19 7.800v14.400M11.800 15h14.400M14 10l10 10M24 10L14 20"/></g><g fill="#18202e"><circle cx="8" cy="8" r="2"/><circle cx="19" cy="15" r="2"/></g></svg>
<svg class="a" style="left:140.500px;top:629px;width:7px;height:9px" viewBox="0 0 14 18"><g fill="#d1d5db"><rect x="1" y="1" width="3.600" height="3.600"/><rect x="8.500" y="1" width="3.600" height="3.600"/><rect x="1" y="7" width="3.600" height="3.600"/><rect x="8.500" y="7" width="3.600" height="3.600"/><rect x="1" y="13" width="3.600" height="3.600"/><rect x="8.500" y="13" width="3.600" height="3.600"/></g></svg>
<svg class="a" style="left:170px;top:636.500px;width:6px;height:9px" viewBox="0 0 12 18"><path d="M9 2L3 9l6 7" fill="none" stroke="#fff" stroke-width="2.200"/></svg>
</div>
<!-- CHROME -->
<div id="menubar" class="a">
<svg class="a" style="left:7.9px;top:-.2px;width:5px;height:5.9px" viewBox="0 0 20 24"><path fill="#fff" d="M14.5 0c.2 1.5-.4 2.9-1.300 4-.9 1.100-2.300 1.900-3.700 1.800-.2-1.400.5-2.900 1.300-3.800C11.700 .9 13.200 .1 14.500 0zM19.300 8.200c-1.600 1-2.600 2.500-2.600 4.400 0 2.200 1.300 3.900 3.300 4.700-.5 1.500-1.200 2.900-2.200 4.200-1 1.300-2 2.500-3.500 2.500s-2-.9-3.800-.9c-1.800 0-2.400.9-3.800.9-1.500 0-2.600-1.300-3.600-2.600C.9 18.300-.5 14 .2 10.600c.6-2.600 2.800-4.800 5.600-4.800 1.500 0 2.800 1 3.800 1 1 0 2.600-1.100 4.500-1.100 1.900 0 3.900.9 5.200 2.500z"/></svg>
<span class="mb" style="left:20.6px;font-weight:bold">fabular</span>
<span class="mb" style="left:45.8px">Bearbeiten</span>
<span class="mb" style="left:78.2px">Ansicht</span>
<span class="mb" style="left:103.4px">Entwickler</span>
<span class="mb" style="left:134.8px">Benutzer</span>
<svg class="a" style="left:781.1px;top:-.4px;width:8.5px;height:7px;opacity:1" viewBox="0 0 14 14"><path d="M3.500 11h8a3 3 0 0 0 .3-6 4 4 0 0 0-7.600-.5A3.300 3.300 0 0 0 3.500 11z" fill="#fff"/></svg>
<svg class="a" style="left:795.2px;top:-.4px;width:7px;height:7px;opacity:0.45" viewBox="0 0 14 14"><path d="M7 1c2 3 2 9 0 12c-2-3-2-9 0-12z" fill="#fff"/></svg>
<svg class="a" style="left:807.0px;top:-.4px;width:8px;height:7px;opacity:1" viewBox="0 0 14 14"><path d="M2 5h3l4-3v10l-4-3H2z" fill="#fff"/><circle cx="11.500" cy="9.500" r="2.300" fill="#f0342c"/></svg>
<svg class="a" style="left:820.7px;top:-.4px;width:7px;height:7px;opacity:1" viewBox="0 0 14 14"><circle cx="7" cy="7" r="5.400" fill="#fff"/><circle cx="7" cy="7" r="2.300" fill="#3104ad"/></svg>
<svg class="a" style="left:833.5px;top:-.4px;width:7px;height:7px;opacity:1" viewBox="0 0 14 14"><circle cx="7" cy="7" r="4.600" fill="none" stroke="#fff" stroke-width="2"/><circle cx="9.500" cy="9.500" r="2.200" fill="#fff"/></svg>
<svg class="a" style="left:847.8px;top:-.4px;width:7px;height:7px;opacity:1" viewBox="0 0 14 14"><circle cx="7" cy="7" r="5.400" fill="#fff"/><path d="M4.500 9.500l1.800-3.700 3.700-1.800-1.800 3.700z" fill="#3104ad"/></svg>
<svg class="a" style="left:862.7px;top:-.4px;width:7px;height:7px;opacity:1" viewBox="0 0 14 14"><path d="M3 2v7h5M6 2v4M10 9.500a2 2 0 1 0 .1 0" fill="none" stroke="#fff" stroke-width="1.700"/></svg>
<svg class="a" style="left:874.8px;top:-.4px;width:8px;height:7px;opacity:1" viewBox="0 0 14 14"><rect x="1" y="2" width="10" height="10" rx="1.500" fill="#34495e"/><circle cx="10" cy="10" r="3.200" fill="#19b5e8"/></svg>
<svg class="a" style="left:932.3px;top:-.4px;width:7px;height:7px;opacity:1" viewBox="0 0 14 14"><circle cx="7" cy="7" r="4.600" fill="none" stroke="#fff" stroke-width="2"/><path d="M4 7h6M7 4v6" stroke="#fff" stroke-width="1.400"/></svg>
<svg class="a" style="left:946.0px;top:-.4px;width:7px;height:7px;opacity:0.8" viewBox="0 0 14 14"><circle cx="7" cy="7" r="4.600" fill="none" stroke="#fff" stroke-width="2"/><circle cx="7" cy="7" r="1.800" fill="#fff"/></svg>
<svg class="a" style="left:959.5px;top:-.4px;width:8px;height:7px;opacity:1" viewBox="0 0 14 14"><circle cx="7" cy="4.500" r="3" fill="#fff"/><path d="M1.500 12.500c0-4 11-4 11 0z" fill="#fff"/><circle cx="7" cy="8.500" r="1.500" fill="#3104ad"/></svg>
<svg class="a" style="left:973.2px;top:-.4px;width:8px;height:7px;opacity:1" viewBox="0 0 14 14"><circle cx="7" cy="7" r="6" fill="#111"/><path d="M3.500 7h1M5.500 5v4M7.500 4v6M9.500 5.500v3" stroke="#fff" stroke-width="1"/></svg>
<svg class="a" style="left:986.5px;top:-.4px;width:9px;height:7px;opacity:1" viewBox="0 0 14 14"><circle cx="4" cy="8" r="3" fill="none" stroke="#fff" stroke-width="1.600"/><circle cx="10" cy="8" r="3" fill="none" stroke="#fff" stroke-width="1.600"/><path d="M4 5l2-2h2l2 2" fill="none" stroke="#fff" stroke-width="1.400"/></svg>
<svg class="a" style="left:1002.6px;top:-.4px;width:7.5px;height:7px;opacity:1" viewBox="0 0 14 14"><path d="M3 2h8l-2 4 2 2-4 5-4-5 2-2z" fill="#fff"/></svg>
<svg class="a" style="left:1016.0px;top:-.4px;width:7.5px;height:7px;opacity:0.5" viewBox="0 0 14 14"><rect x="2" y="3" width="7" height="6" fill="none" stroke="#fff" stroke-width="1.300"/><rect x="5" y="6" width="7" height="5" fill="none" stroke="#fff" stroke-width="1.300"/></svg>
<svg class="a" style="left:1027.8px;top:-.4px;width:7.5px;height:7px;opacity:1" viewBox="0 0 14 14"><path d="M2 12l1-3 7-7 2 2-7 7z" fill="#fff"/></svg>
<svg class="a" style="left:1041.5px;top:-.4px;width:7.5px;height:7px;opacity:1" viewBox="0 0 14 14"><path d="M7 1l5 6-5 6-5-6z" fill="#fff"/><circle cx="7" cy="7" r="1.700" fill="#3104ad"/></svg>
<svg class="a" style="left:1056.0px;top:-.4px;width:7.5px;height:7px;opacity:1" viewBox="0 0 14 14"><path d="M2 1.500h10v6c0 3-2.500 4.500-5 5.500-2.500-1-5-2.500-5-5.500z" fill="#fff"/><path d="M4.500 5h5M4.500 7.500h5" stroke="#3a0f9b" stroke-width="1.100"/></svg>
<svg class="a" style="left:1070.5px;top:-.4px;width:8px;height:7px;opacity:1" viewBox="0 0 14 14"><rect x="1.500" y="1.500" width="11" height="10" rx="1.500" fill="none" stroke="#fff" stroke-width="1.700"/><path d="M4 11.500V8.500h2l1 1.500 1-1.500h2v3" fill="none" stroke="#fff" stroke-width="1.300"/></svg>
<svg class="a" style="left:1084.9px;top:-.4px;width:7px;height:7px;opacity:0.85" viewBox="0 0 14 14"><path d="M3 3l7 3-3 1.200 3.500 3.500-1 1L6 8.200 5 11z" fill="#fff"/></svg>
<svg class="a" style="left:1098.8px;top:-.4px;width:7.5px;height:7px;opacity:1" viewBox="0 0 14 14"><path d="M2 0h6l4 4v10H2z" fill="#fff"/></svg>
<svg class="a" style="left:1111.4px;top:-.4px;width:8px;height:7px;opacity:1" viewBox="0 0 14 14"><circle cx="7" cy="7.500" r="5.600" fill="#f5c518"/><circle cx="6" cy="4.500" r="3" fill="#e8342c"/></svg>
<svg class="a" style="left:1124.3px;top:-.4px;width:7.5px;height:7px;opacity:1" viewBox="0 0 14 14"><circle cx="7" cy="7" r="4.600" fill="none" stroke="#fff" stroke-width="2"/><path d="M6 4.500l3.500 2.500L6 9.500z" fill="#fff"/></svg>
<svg class="a" style="left:1137.6px;top:-.4px;width:8px;height:7px;opacity:1" viewBox="0 0 14 14"><path d="M2.500 9V7a4.500 4.500 0 0 1 9 0v2" fill="none" stroke="#fff" stroke-width="1.600"/><rect x="1.500" y="8" width="3" height="4.500" rx="1" fill="#fff"/><rect x="9.500" y="8" width="3" height="4.500" rx="1" fill="#fff"/></svg>
<svg class="a" style="left:1151.4px;top:-.4px;width:7px;height:7px;opacity:0.9" viewBox="0 0 14 14"><path d="M4.500 3.500l5 5.500L7 11.500v-10L9.500 4l-5 5.500" fill="none" stroke="#fff" stroke-width="1.200"/></svg>
<svg class="a" style="left:1163.6px;top:-.4px;width:10px;height:7px;opacity:1" viewBox="0 0 14 14"><rect x=".5" y="3.500" width="11.500" height="6.500" rx="1.500" fill="#fff"/><rect x="12.500" y="5.500" width="1.300" height="2.500" fill="#fff"/><rect x="3" y="5.500" width="6" height="2.500" fill="#3104ad" opacity=".6"/></svg>
<svg class="a" style="left:1179.8px;top:-.4px;width:8.5px;height:7px;opacity:1" viewBox="0 0 14 14"><path d="M7 12l-6.500-7.500a9.500 9.500 0 0 1 13 0z" fill="#fff"/></svg>
<svg class="a" style="left:1193.5px;top:-.4px;width:7.5px;height:7px;opacity:1" viewBox="0 0 14 14"><circle cx="6" cy="6" r="3.600" fill="none" stroke="#fff" stroke-width="1.700"/><path d="M8.800 8.800l3.200 3.200" stroke="#fff" stroke-width="1.800"/></svg>
<svg class="a" style="left:1205.3px;top:-.4px;width:8.5px;height:7px;opacity:1" viewBox="0 0 14 14"><rect x="1.500" y="2" width="11" height="4.200" rx="2" fill="#fff"/><rect x="1.500" y="7.500" width="11" height="4.200" rx="2" fill="#fff"/><circle cx="4" cy="4.100" r="1.300" fill="#3104ad"/><circle cx="10" cy="9.600" r="1.300" fill="#3104ad"/></svg>
<svg class="a" style="left:1218.5px;top:-.4px;width:7.5px;height:7px;opacity:1" viewBox="0 0 14 14"><circle cx="7" cy="7" r="5.600" fill="#5b8def"/><path d="M7 1.400A5.600 5.600 0 0 1 12.600 7H7z" fill="#e94c89"/><path d="M7 12.600A5.600 5.600 0 0 1 1.400 7H7z" fill="#38c6c0"/><circle cx="7" cy="7" r="2" fill="#fff"/></svg>
<span class="mb" style="left:884.2px">3CX Desktop App</span>
<span class="mb" style="left:1230.5px">Fr. 6. Dez.&nbsp; 19:30</span>
</div>
<div id="titlebar" class="a">
<i class="a" style="left:2.6px;top:3px;width:5px;height:5px;border-radius:50%;background:#fe5f57"></i>
<i class="a" style="left:10.4px;top:3px;width:5px;height:5px;border-radius:50%;background:#febc2e"></i>
<i class="a" style="left:18px;top:3px;width:5px;height:5px;border-radius:50%;background:#28c840"></i>
<span class="t lib" style="left:623.4px;top:0.3px;font-weight:bold;font-size:5px;color:#dcdcdc">fabular 4.1.6</span>
</div>
<div id="tabbar" class="a">
<svg class="a" style="left:0;top:0;width:30px;height:14px" viewBox="0 0 30 14"><path d="M9.600 4.600L5.300 7.900l4.300 3.300M16.900 4.600l4.400 3.300-4.400 3.300" fill="none" stroke="#fff" stroke-width="1.100"/></svg>
</div>
<div class="tab" style="left:30px;width:62.6px;background:#fbb908"><i></i><span>CRM</span><b>×</b></div>
<div class="tab" style="left:94px;width:63px;background:#fbb908"><i></i><span>CRM</span><b>×</b></div>
<div class="tab" style="left:158px;top:20.2px;height:12.4px;width:64.4px;background:#e3173a;border:0.8px solid #e8e8e8;border-bottom:0"><i style="top:3.4px;left:2.600px"></i><span style="top:1.300px;font-weight:bold;left:10px">R - TEST</span><b style="top:1.100px">×</b></div>
<div class="tab" style="left:224.2px;width:63px;background:#12b5bd"><i></i><span>R - TEST</span><b>×</b></div>
<span class="t lib" style="left:292px;top:21px;color:#fff;font-size:6px">+</span>
</body></html>
